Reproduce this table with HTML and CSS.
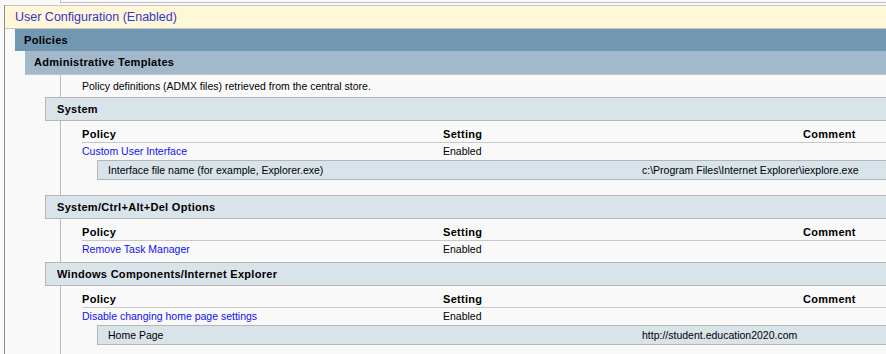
FILE: index.html
```html
<!DOCTYPE html>
<html>
<head>
<meta charset="utf-8">
<title>Group Policy Report</title>
<link rel="stylesheet" href="styles.css">
</head>
<body>
<div class="stub"></div>
<div class="gpo">
  <div class="scope-head">User Configuration (Enabled)</div>
  <div class="sect">
    <div class="head head-policies">Policies</div>
    <div class="sect">
      <div class="head head-admin">Administrative Templates</div>
      <div class="note">Policy definitions (ADMX files) retrieved from the central store.</div>

      <div class="cat">
        <div class="cat-head">System</div>
        <div class="cat-body">
          <div class="row row-head"><span>Policy</span><span>Setting</span><span>Comment</span></div>
          <div class="row row-data"><a class="link" href="#">Custom User Interface</a><span>Enabled</span><span></span></div>
          <div class="sub"><span>Interface file name (for example, Explorer.exe)</span><span>c:\Program Files\Internet Explorer\iexplore.exe</span></div>
        </div>
      </div>

      <div class="cat">
        <div class="cat-head">System/Ctrl+Alt+Del Options</div>
        <div class="cat-body">
          <div class="row row-head"><span>Policy</span><span>Setting</span><span>Comment</span></div>
          <div class="row row-data"><a class="link" href="#">Remove Task Manager</a><span>Enabled</span><span></span></div>
        </div>
      </div>

      <div class="cat">
        <div class="cat-head">Windows Components/Internet Explorer</div>
        <div class="cat-body cat-last">
          <div class="row row-head"><span>Policy</span><span>Setting</span><span>Comment</span></div>
          <div class="row row-data"><a class="link" href="#">Disable changing home page settings</a><span>Enabled</span><span></span></div>
          <div class="sub"><span>Home Page</span><span>http://student.education2020.com</span></div>
        </div>
      </div>
    </div>
  </div>
</div>
</body>
</html>
```
FILE: styles.css
```css
html, body {
  margin: 0;
  padding: 0;
  background: #f9f9f9;
  overflow: hidden;
}

body {
  font-family: "Liberation Sans", Arial, sans-serif;
  font-size: 10.5px;
  color: #000;
  width: 886px;
}

/* tail of the previous report block */
.stub {
  margin-left: 60px;
  height: 2px;
  border-left: 1px solid #bdbdbd;
  border-bottom: 1px solid #bdbdbd;
  margin-bottom: 2px;
}

.gpo {
  margin-left: 4px;
  border-left: 1px solid #8e8e8e;
  min-height: 400px;
}

.scope-head {
  background: #fff7d7;
  border-top: 1px solid #c4c4c4;
  border-bottom: 1px solid #c4c4c4;
  height: 22px;
  line-height: 22px;
  padding-left: 10px;
  color: #3434cc;
  font-size: 12.5px;
}

.sect {
  margin-left: 10px;
}

.head {
  font-weight: bold;
  font-size: 11px;
  letter-spacing: 0.3px;
  padding-left: 9px;
}

.head-policies {
  background: #7197b1;
  height: 22px;
  line-height: 22px;
}

.head-admin {
  background: #a2b9cb;
  height: 23px;
  line-height: 23px;
  border-bottom: 1px solid #c4c4c4;
}

.note {
  margin-left: 35px;
  border-left: 1px solid #bdbdbd;
  padding-left: 21px;
  height: 22px;
  line-height: 22px;
}

.cat {
  margin-left: 20px;
}

.cat-head {
  background: #d9e3ea;
  border: 1px solid #b6b6b6;
  border-right: 0;
  height: 22px;
  line-height: 22px;
  padding-left: 11px;
  font-weight: bold;
  font-size: 11px;
  letter-spacing: 0.3px;
}

.cat-body {
  margin-left: 15px;
  border-left: 1px solid #bdbdbd;
  padding-left: 21px;
  padding-bottom: 4px;
}

.cat-last {
  padding-bottom: 20px;
}

.row {
  display: grid;
  grid-template-columns: 361px 360px 1fr;
}

.row-head {
  font-weight: bold;
  font-size: 11px;
  letter-spacing: 0.3px;
  height: 14px;
  line-height: 13px;
  padding-top: 7px;
  border-bottom: 1px solid #c8c8c8;
}

.row-data {
  height: 17px;
  line-height: 17px;
}

.link {
  color: #1010f5;
  text-decoration: none;
}

.sub {
  margin-left: 15px;
  display: grid;
  grid-template-columns: 534px 1fr;
  background: #d9e3ea;
  border-top: 1px solid #b6b6b6;
  border-bottom: 1px solid #b6b6b6;
  border-left: 1px solid #b6b6b6;
  height: 18px;
  line-height: 18px;
  padding-left: 10px;
  margin-bottom: 11px;
}
```
